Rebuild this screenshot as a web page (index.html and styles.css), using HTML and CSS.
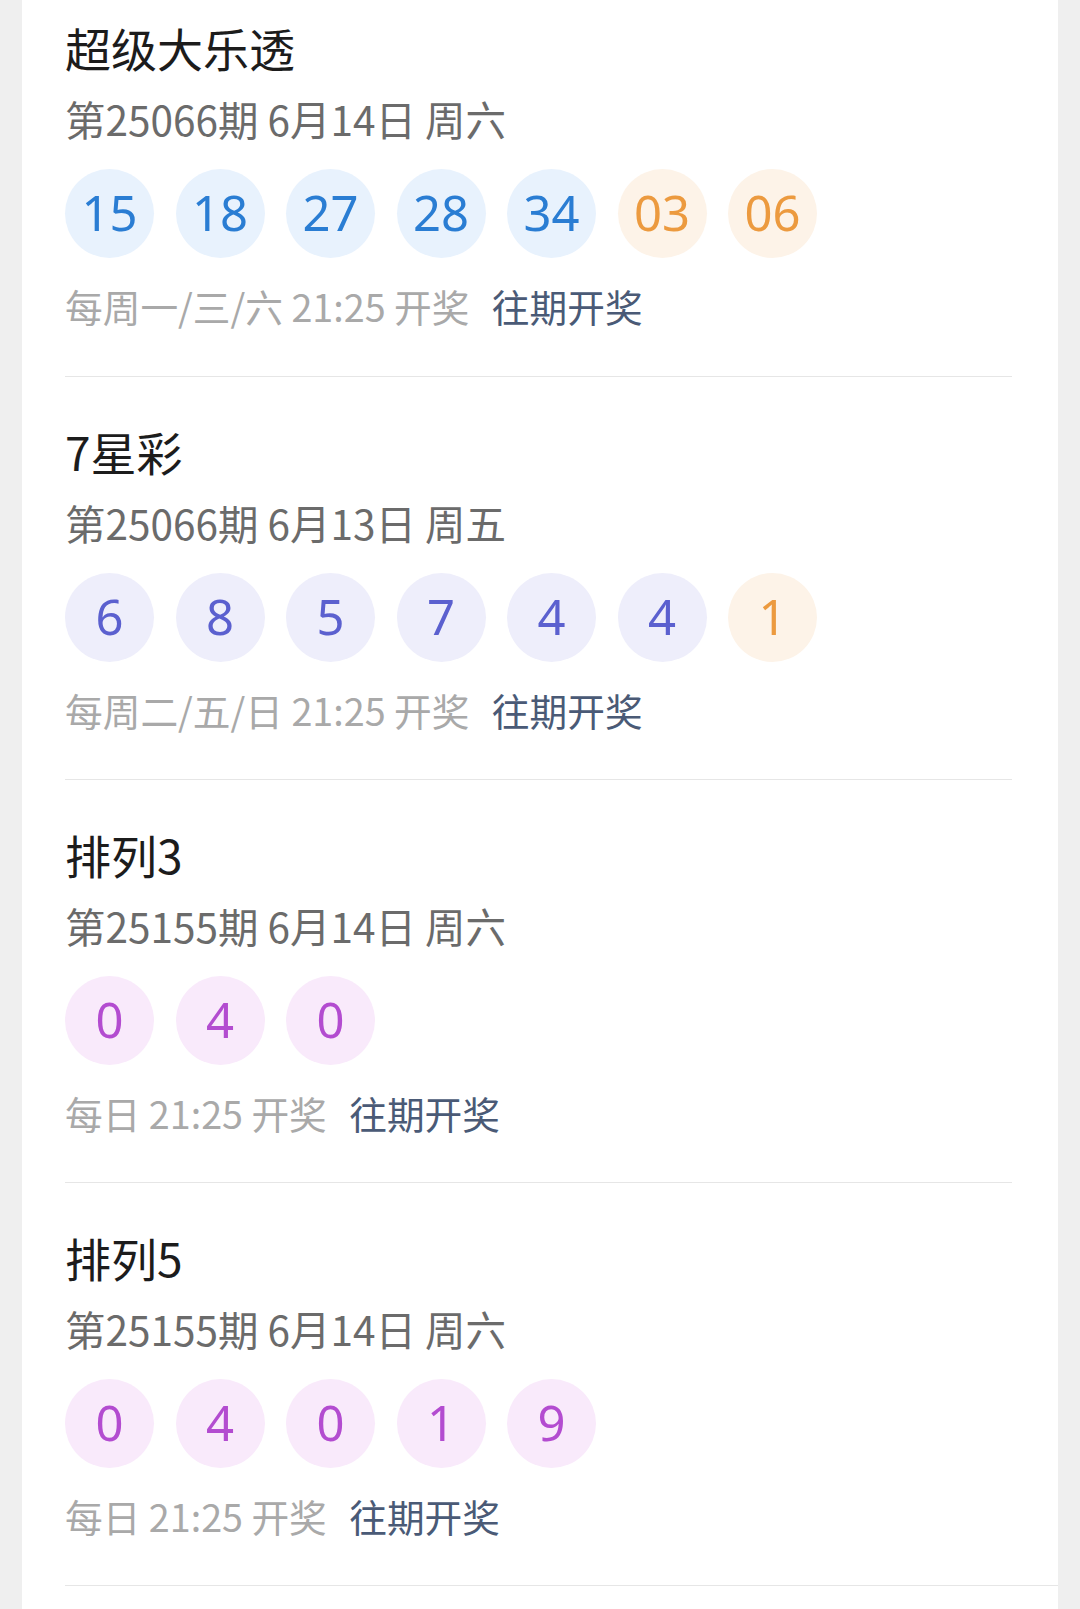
FILE: index.html
```html
<!DOCTYPE html>
<html lang="zh-CN">
<head>
    <meta charset="UTF-8">
    <meta name="viewport" content="width=device-width, initial-scale=1.0">
    <title>开奖公告</title>
    <link rel="stylesheet" href="styles.css">
</head>
<body>
    <div class="tarjeta">
        <div class="sorteo">
            <div class="nombre">超级大乐透</div>
            <div class="fecha">第25066期 6月14日 周六</div>
            <div class="bolas">
                <span class="bola azul">15</span>
                <span class="bola azul">18</span>
                <span class="bola azul">27</span>
                <span class="bola azul">28</span>
                <span class="bola azul">34</span>
                <span class="bola naranja">03</span>
                <span class="bola naranja">06</span>
            </div>
            <div class="pie">每周一/三/六 21:25 开奖 <a class="historial" href="#">往期开奖</a></div>
        </div>
        <div class="sorteo">
            <div class="nombre">7星彩</div>
            <div class="fecha">第25066期 6月13日 周五</div>
            <div class="bolas">
                <span class="bola lila">6</span>
                <span class="bola lila">8</span>
                <span class="bola lila">5</span>
                <span class="bola lila">7</span>
                <span class="bola lila">4</span>
                <span class="bola lila">4</span>
                <span class="bola naranja">1</span>
            </div>
            <div class="pie">每周二/五/日 21:25 开奖 <a class="historial" href="#">往期开奖</a></div>
        </div>
        <div class="sorteo">
            <div class="nombre">排列3</div>
            <div class="fecha">第25155期 6月14日 周六</div>
            <div class="bolas">
                <span class="bola rosa">0</span>
                <span class="bola rosa">4</span>
                <span class="bola rosa">0</span>
            </div>
            <div class="pie">每日 21:25 开奖 <a class="historial" href="#">往期开奖</a></div>
        </div>
        <div class="sorteo">
            <div class="nombre">排列5</div>
            <div class="fecha">第25155期 6月14日 周六</div>
            <div class="bolas">
                <span class="bola rosa">0</span>
                <span class="bola rosa">4</span>
                <span class="bola rosa">0</span>
                <span class="bola rosa">1</span>
                <span class="bola rosa">9</span>
            </div>
            <div class="pie">每日 21:25 开奖 <a class="historial" href="#">往期开奖</a></div>
        </div>
    </div>
</body>
</html>
```

FILE: styles.css
```css
body {
    margin: 0;
    background-color: #efefef;
    font-family: "Noto Sans CJK SC", "Noto Sans", sans-serif;
    height: 1609px;
    overflow: hidden;
}
.tarjeta {
    background-color: #fff;
    margin: 0 22px;
    padding: 0 46px 0 43px;
    min-height: 1609px;
}
.sorteo {
    padding: 46px 0 45px;
    border-bottom: 1px solid #e6e6e6;
}
.sorteo:first-child {
    padding-top: 19px;
    padding-bottom: 46px;
}
.sorteo:last-child {
    margin-right: -46px;
}
.nombre {
    font-size: 46px;
    line-height: 56px;
    color: #1c1c1c;
}
.fecha {
    margin-top: 19px;
    font-size: 40.5px;
    line-height: 50px;
    color: #6b6b6b;
}
.bolas {
    display: flex;
    gap: 21.5px;
    margin-top: 25px;
}
.bola {
    width: 89px;
    height: 89px;
    padding-bottom: 4px;
    box-sizing: border-box;
    border-radius: 50%;
    display: flex;
    justify-content: center;
    align-items: center;
    font-family: "Noto Sans", sans-serif;
    font-size: 49px;
}
.azul {
    background-color: #e8f2fd;
    color: #2a7dd3;
}
.naranja {
    background-color: #fdf3e8;
    color: #ec9a3f;
}
.lila {
    background-color: #eeeefb;
    color: #5b60cf;
}
.rosa {
    background-color: #f9eafb;
    color: #b34cd0;
}
.pie {
    margin-top: 24px;
    font-size: 37.7px;
    line-height: 48px;
    color: #a9a9a9;
}
.historial {
    margin-left: 14px;
    color: #4a5a76;
    text-decoration: none;
}
```
